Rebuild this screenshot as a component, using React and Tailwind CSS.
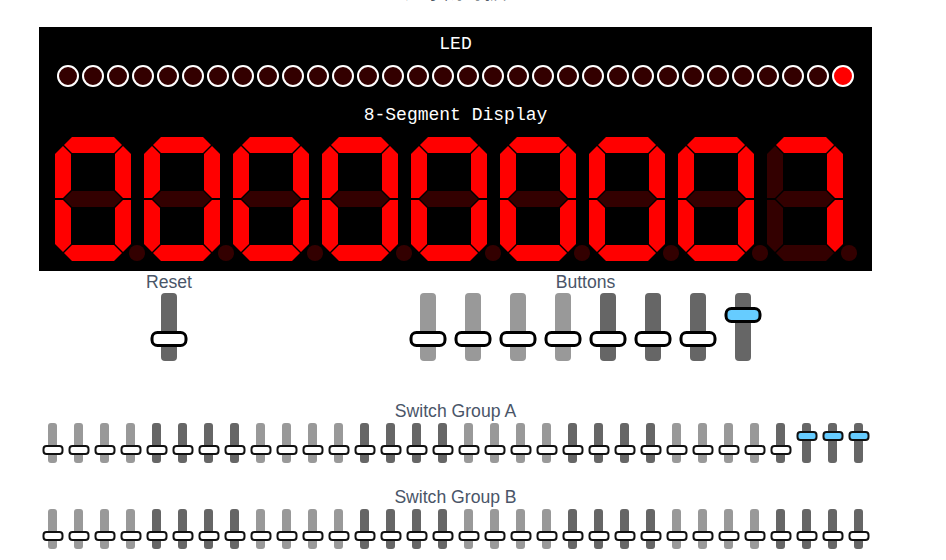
import React from "react";

const ON = "#ff0000";
const OFF = "#330000";

function hseg(x1, x2, y) {
  const g = 1, h = 8;
  return `${x1 + g},${y} ${x1 + g + h},${y - h} ${x2 - g - h},${y - h} ${x2 - g},${y} ${x2 - g - h},${y + h} ${x1 + g + h},${y + h}`;
}

function vUpper(x, left) {
  const o = left ? x - 8 : x + 8;
  const i = left ? x + 8 : x - 8;
  return `${o},17 ${x},9 ${i},17 ${i},53 ${x},61 ${o},61`;
}
function vLower(x, left) {
  const o = left ? x - 8 : x + 8;
  const i = left ? x + 8 : x - 8;
  return `${o},63 ${x},63 ${i},71 ${i},107 ${x},115 ${o},107`;
}

const DIGITS = {
  0: { a: 1, b: 1, c: 1, d: 1, e: 1, f: 1, g: 0 },
  7: { a: 1, b: 1, c: 1, d: 0, e: 0, f: 0, g: 0 },
};

function Digit({ value }) {
  const s = DIGITS[value];
  const col = (k) => (s[k] ? ON : OFF);
  return (
    <svg width="89" height="124" viewBox="0 0 89 124" className="overflow-visible">
      <polygon points={hseg(8, 68, 8)} fill={col("a")} />
      <polygon points={vUpper(68, false)} fill={col("b")} />
      <polygon points={vLower(68, false)} fill={col("c")} />
      <polygon points={hseg(8, 68, 116)} fill={col("d")} />
      <polygon points={vLower(8, true)} fill={col("e")} />
      <polygon points={vUpper(8, true)} fill={col("f")} />
      <polygon points={hseg(8, 68, 62)} fill={col("g")} />
      <circle cx="82" cy="116" r="8" fill={OFF} />
    </svg>
  );
}

function BigSwitch({ on, dark }) {
  return (
    <div className="relative flex h-[68px] w-[45px] justify-center">
      <div className={`h-full w-[16px] rounded-[4px] ${dark ? "bg-[#666666]" : "bg-[#999999]"}`} />
      <div
        className={`absolute left-1/2 h-[16px] w-[37px] -translate-x-1/2 rounded-[7px] border-[3px] border-black ${
          on ? "top-[14px] bg-[#66ccff]" : "top-[38px] bg-white"
        }`}
      />
    </div>
  );
}

function SmallSwitch({ on, dark }) {
  return (
    <div className="relative flex h-[40px] w-[26px] justify-center">
      <div className={`h-full w-[9px] rounded-[3px] ${dark ? "bg-[#666666]" : "bg-[#999999]"}`} />
      <div
        className={`absolute left-1/2 h-[10px] w-[21px] -translate-x-1/2 rounded-[4px] border-2 border-[#111111] ${
          on ? "top-[8px] bg-[#66ccff]" : "top-[22px] bg-white"
        }`}
      />
    </div>
  );
}

const label = "h-[20px] text-[17.6px] leading-[20px] text-[#4a5568] font-['Liberation_Sans',Arial,sans-serif]";
const mono = "h-[20px] text-[18px] leading-[20px] text-white font-['Liberation_Mono','Courier_New',monospace]";

export default function App() {
  const leds = Array.from({ length: 32 }, (_, i) => i === 31);
  const digits = [0, 0, 0, 0, 0, 0, 0, 0, 7];
  const groupA = Array.from({ length: 32 }, (_, i) => i >= 29);
  const groupB = Array.from({ length: 32 }, () => false);

  return (
    <div className="min-h-screen bg-white pl-[39px]">
      <div className="w-[833px]">
        <div className="-mt-[28px] mb-[25px] h-[30px] text-center text-[26px] font-bold leading-[30px] text-[#2d3748] font-['Noto_Sans_CJK_SC',sans-serif]">
          虚拟面板
        </div>

        <div className="flex h-[244px] w-[833px] flex-col items-center bg-black pt-[7px]">
          <div className={mono}>LED</div>
          <div className="mt-[11px] flex gap-[3px]">
            {leds.map((on, i) => (
              <div
                key={i}
                className={`h-[22px] w-[22px] rounded-full border-2 border-white ${on ? "bg-[#ff0000]" : "bg-[#330000]"}`}
              />
            ))}
          </div>
          <div className={`mt-[18px] ${mono}`}>8-Segment Display</div>
          <div className="mt-[12px] flex">
            {digits.map((d, i) => (
              <Digit key={i} value={d} />
            ))}
          </div>
        </div>

        <div className="flex pt-[1px]">
          <div className="flex w-[260px] flex-col items-center">
            <div className={label}>Reset</div>
            <div className="mt-[1px]">
              <BigSwitch dark on={false} />
            </div>
          </div>
          <div className="flex flex-1 flex-col items-center">
            <div className={label}>Buttons</div>
            <div className="mt-[1px] flex">
              {Array.from({ length: 8 }, (_, i) => (
                <BigSwitch key={i} dark={i >= 4} on={i === 7} />
              ))}
            </div>
          </div>
        </div>

        <div className="mt-[40px] flex flex-col items-center">
          <div className={label}>Switch Group A</div>
          <div className="mt-[2px] flex">
            {groupA.map((on, i) => (
              <SmallSwitch key={i} on={on} dark={Math.floor(i / 4) % 2 === 1} />
            ))}
          </div>
        </div>

        <div className="mt-[24px] flex flex-col items-center">
          <div className={label}>Switch Group B</div>
          <div className="mt-[2px] flex">
            {groupB.map((on, i) => (
              <SmallSwitch key={i} on={on} dark={Math.floor(i / 4) % 2 === 1} />
            ))}
          </div>
        </div>
      </div>
    </div>
  );
}
